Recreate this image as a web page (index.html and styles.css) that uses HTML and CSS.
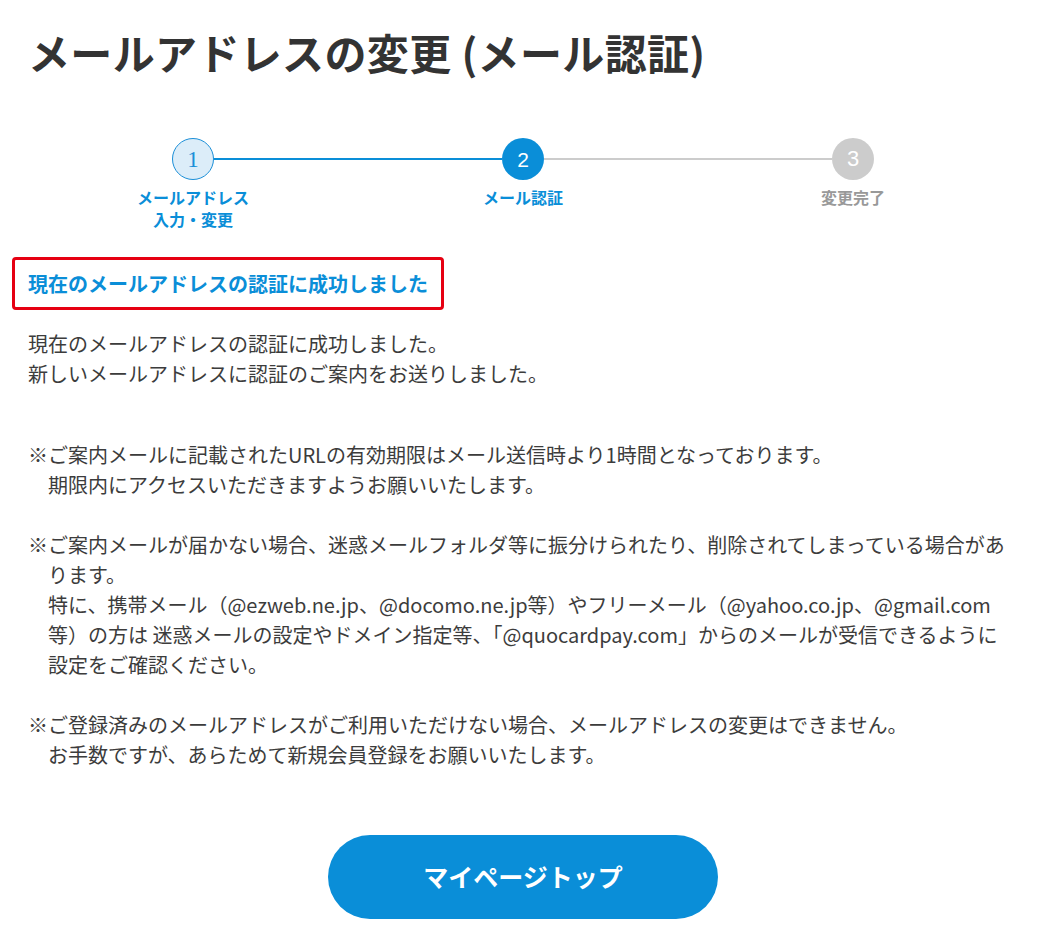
FILE: index.html
```html
<!DOCTYPE html>
<html lang="ja">
<head>
<meta charset="utf-8">
<title>メールアドレスの変更 (メール認証)</title>
<link rel="stylesheet" href="styles.css">
</head>
<body>
<main class="page">
  <h1 class="title">メールアドレスの変更 (メール認証)</h1>

  <section class="stepper">
    <div class="track">
      <span class="dot dot-done">1</span>
      <span class="bar bar-active"></span>
      <span class="dot dot-current">2</span>
      <span class="bar"></span>
      <span class="dot dot-todo">3</span>
    </div>
    <div class="labels">
      <div class="label label-active">メールアドレス<br>入力・変更</div>
      <div class="label label-active">メール認証</div>
      <div class="label label-todo">変更完了</div>
    </div>
  </section>

  <div class="notice">現在のメールアドレスの認証に成功しました</div>

  <p class="lead">現在のメールアドレスの認証に成功しました。<br>新しいメールアドレスに認証のご案内をお送りしました。</p>

  <p class="note">※ご案内メールに記載されたURLの有効期限はメール送信時より1時間となっております。<br>期限内にアクセスいただきますようお願いいたします。</p>

  <p class="note">※ご案内メールが届かない場合、迷惑メールフォルダ等に振分けられたり、削除されてしまっている場合があ<br>ります。<br>特に、携帯メール（@ezweb.ne.jp、@docomo.ne.jp等）やフリーメール（@yahoo.co.jp、@gmail.com<br>等）の方は 迷惑メールの設定やドメイン指定等、「@quocardpay.com」からのメールが受信できるように<br>設定をご確認ください。</p>

  <p class="note">※ご登録済みのメールアドレスがご利用いただけない場合、メールアドレスの変更はできません。<br>お手数ですが、あらためて新規会員登録をお願いいたします。</p>

  <div class="actions">
    <a class="btn" href="#">マイページトップ</a>
  </div>
</main>
</body>
</html>
```

FILE: styles.css
```css
* { box-sizing: border-box; }

html, body {
  margin: 0;
  padding: 0;
  background: #fff;
}

body {
  font-family: "Noto Sans CJK JP", "Noto Sans", sans-serif;
  color: #3c3c3c;
}

.page {
  width: 1046px;
  padding: 22px 28px 20px;
}

.title {
  margin: 0;
  font-size: 42px;
  line-height: 60px;
  font-weight: 700;
  letter-spacing: 0.35px;
  color: #333;
}

.stepper {
  width: 990px;
  margin-top: 56px;
}

.track {
  display: flex;
  align-items: center;
  padding: 0 144px;
}

.dot {
  flex: none;
  width: 42px;
  height: 42px;
  border-radius: 50%;
  display: flex;
  align-items: center;
  justify-content: center;
  font-size: 21px;
  line-height: 1;
}

.dot-done {
  background: #dcedf9;
  border: 1px solid #1b8fd8;
  color: #1b8fd8;
  font-family: "Liberation Serif", serif;
  font-size: 23px;
}

.dot-current {
  background: #0a8ed8;
  color: #fff;
  font-family: "Liberation Sans", sans-serif;
}

.dot-todo {
  background: #cccccc;
  color: #fff;
  font-family: "Liberation Sans", sans-serif;
  font-size: 22px;
}

.bar {
  flex: 1;
  height: 2px;
  background: #cccccc;
}

.bar-active {
  background: #0a8ed8;
}

.labels {
  display: grid;
  grid-template-columns: repeat(3, 1fr);
  margin-top: 6px;
}

.label {
  text-align: center;
  font-size: 16px;
  line-height: 22px;
  font-weight: 700;
}

.label-active { color: #0a8ed8; }
.label-todo { color: #999; }

.notice {
  display: inline-block;
  margin: 27px 0 0 -16px;
  padding: 9px 13px;
  border: 3px solid #e60012;
  border-radius: 4px;
  color: #0a8ed8;
  font-size: 20px;
  line-height: 29px;
  font-weight: 700;
}

.lead,
.note {
  margin: 0;
  font-size: 20px;
  line-height: 30px;
}

.lead {
  margin-top: 19px;
  margin-bottom: 51px;
}

.note {
  padding-left: 20px;
  text-indent: -20px;
  margin-bottom: 30px;
}

.actions {
  display: flex;
  justify-content: center;
  margin-top: 65px;
}

.btn {
  display: flex;
  align-items: center;
  justify-content: center;
  width: 390px;
  height: 84px;
  border-radius: 42px;
  background: #0a8ed8;
  color: #fff;
  font-size: 25px;
  font-weight: 700;
  text-decoration: none;
  padding-bottom: 3px;
}
```
